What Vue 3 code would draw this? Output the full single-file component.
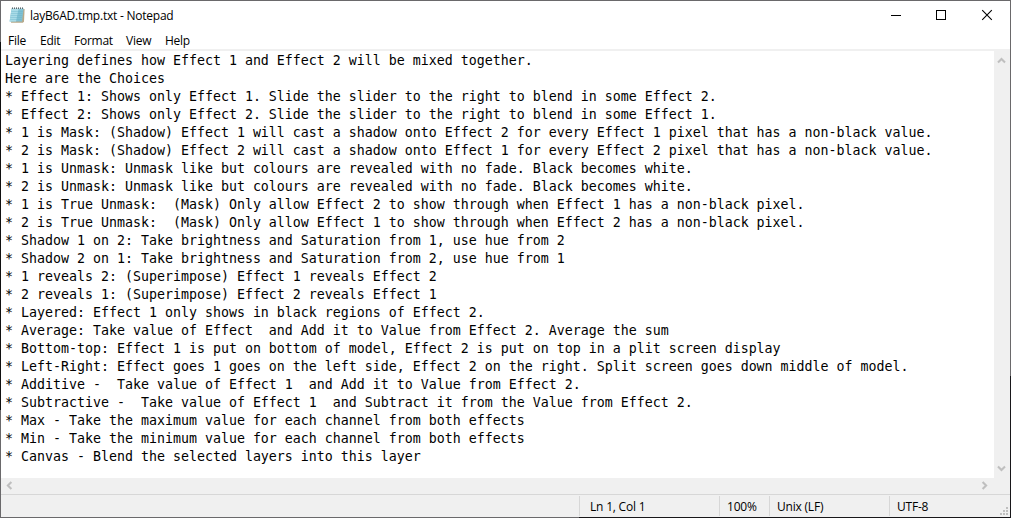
<script setup>
const menus = [
  { label: 'File', cls: 'm-file' },
  { label: 'Edit', cls: 'm-edit' },
  { label: 'Format', cls: 'm-format' },
  { label: 'View', cls: 'm-view' },
  { label: 'Help', cls: 'm-help' },
]

const lines = [
  'Layering defines how Effect 1 and Effect 2 will be mixed together.',
  'Here are the Choices',
  '* Effect 1: Shows only Effect 1. Slide the slider to the right to blend in some Effect 2.',
  '* Effect 2: Shows only Effect 2. Slide the slider to the right to blend in some Effect 1.',
  '* 1 is Mask: (Shadow) Effect 1 will cast a shadow onto Effect 2 for every Effect 1 pixel that has a non-black value.',
  '* 2 is Mask: (Shadow) Effect 2 will cast a shadow onto Effect 1 for every Effect 2 pixel that has a non-black value.',
  '* 1 is Unmask: Unmask like but colours are revealed with no fade. Black becomes white.',
  '* 2 is Unmask: Unmask like but colours are revealed with no fade. Black becomes white.',
  '* 1 is True Unmask:  (Mask) Only allow Effect 2 to show through when Effect 1 has a non-black pixel.',
  '* 2 is True Unmask:  (Mask) Only allow Effect 1 to show through when Effect 2 has a non-black pixel.',
  '* Shadow 1 on 2: Take brightness and Saturation from 1, use hue from 2',
  '* Shadow 2 on 1: Take brightness and Saturation from 2, use hue from 1',
  '* 1 reveals 2: (Superimpose) Effect 1 reveals Effect 2',
  '* 2 reveals 1: (Superimpose) Effect 2 reveals Effect 1',
  '* Layered: Effect 1 only shows in black regions of Effect 2.',
  '* Average: Take value of Effect  and Add it to Value from Effect 2. Average the sum',
  '* Bottom-top: Effect 1 is put on bottom of model, Effect 2 is put on top in a plit screen display',
  '* Left-Right: Effect goes 1 goes on the left side, Effect 2 on the right. Split screen goes down middle of model.',
  '* Additive -  Take value of Effect 1  and Add it to Value from Effect 2.',
  '* Subtractive -  Take value of Effect 1  and Subtract it from the Value from Effect 2.',
  '* Max - Take the maximum value for each channel from both effects',
  '* Min - Take the minimum value for each channel from both effects',
  '* Canvas - Blend the selected layers into this layer',
]
</script>

<template>
  <div class="window">
    <header class="titlebar">
      <svg class="app-icon" width="16" height="16" viewBox="0 0 16 16">
        <path d="M3.2 2H15.6L15 14.8l-1.2 1H2z" fill="#b7a98a" />
        <path d="M2.6 1.5h12L13 14.6H.6z" fill="#7fc0d3" />
        <path d="M2.6 1.5h7L7 14.6H.6z" fill="#a9dbe7" />
        <path d="M2.3 4.5h11.5M2 6.5h11.5M1.7 8.5h11.5M1.4 10.5h11.5M1.1 12.5h11.5" stroke="#62aec4" stroke-width=".35" />
        <path d="M2.6 1.6h12" stroke="#cfe4ea" />
        <path d="M3.5 .4v1.6M5.5 .4v1.6M7.5 .4v1.6M9.5 .4v1.6M11.5 .4v1.6M13.5 .4v1.6" stroke="#4d5b60" stroke-width=".9" />
      </svg>
      <span class="title">layB6AD.tmp.txt - Notepad</span>
      <div class="controls">
        <svg width="46" height="29" viewBox="0 0 46 29" shape-rendering="crispEdges"><path d="M18 14.5h10" stroke="#000" /></svg>
        <svg width="46" height="29" viewBox="0 0 46 29" shape-rendering="crispEdges"><path d="M17.5 9.5h9v9h-9z" fill="none" stroke="#000" /></svg>
        <svg width="45" height="29" viewBox="0 0 45 29"><path d="M17.2 9.2l9.6 9.6M26.8 9.2l-9.6 9.6" stroke="#000" stroke-width="1.1" /></svg>
      </div>
    </header>

    <nav class="menubar">
      <span v-for="m in menus" :key="m.label" class="menu" :class="m.cls">{{ m.label }}</span>
    </nav>

    <main class="editor">
      <div class="text">
        <div v-for="(line, i) in lines" :key="i" class="line">{{ line }}</div>
      </div>
      <div class="vscroll">
        <svg width="9" height="7" viewBox="0 0 9 7"><path d="M1 5.4L4.5 1.9L8 5.4" fill="none" stroke="#bfbfbf" stroke-width="2.1" /></svg>
        <svg width="9" height="7" viewBox="0 0 9 7"><path d="M1 1.6L4.5 5.1L8 1.6" fill="none" stroke="#bfbfbf" stroke-width="2.1" /></svg>
      </div>
    </main>

    <div class="hscroll">
      <svg width="7" height="9" viewBox="0 0 7 9"><path d="M5.4 1L1.9 4.5L5.4 8" fill="none" stroke="#bfbfbf" stroke-width="2.1" /></svg>
      <svg width="7" height="9" viewBox="0 0 7 9"><path d="M1.6 1L5.1 4.5L1.6 8" fill="none" stroke="#bfbfbf" stroke-width="2.1" /></svg>
    </div>

    <footer class="statusbar">
      <div class="cell blank"></div>
      <div class="cell pos"><span>Ln 1, Col 1</span></div>
      <div class="cell zoom"><span>100%</span></div>
      <div class="cell eol"><span>Unix (LF)</span></div>
      <div class="cell enc"><span>UTF-8</span></div>
      <svg class="grip" width="8" height="8" viewBox="0 0 8 8" fill="#bfbfbf" shape-rendering="crispEdges">
        <path d="M6 0h2v2H6zM3 3h2v2H3zM6 3h2v2H6zM0 6h2v2H0zM3 6h2v2H3zM6 6h2v2H6z" />
      </svg>
    </footer>
  </div>
</template>

<style scoped>
.window {
  box-sizing: border-box;
  width: 1011px;
  height: 518px;
  display: flex;
  flex-direction: column;
  padding: 1px;
  background:
    linear-gradient(#6a696b, #6a696b) 0 0 / 100% 1px no-repeat,
    linear-gradient(90deg, #6a696b 579px, #18171a 579px) 0 100% / 100% 1px no-repeat,
    linear-gradient(#6a696b 42px, #101010 42px 410px, #6a696b 410px) 0 0 / 1px 100% no-repeat,
    linear-gradient(#6a696b 376px, #18171a 376px) 100% 0 / 1px 100% no-repeat,
    #fff;
  color: #000;
  font: 12px/16px "Open Sans", "Noto Sans", sans-serif;
  overflow: hidden;
}
.titlebar {
  height: 30px;
  flex: none;
  display: flex;
  align-items: flex-start;
}
.app-icon {
  margin: 6px 0 0 8px;
}
.title {
  margin: 7px 0 0 5px;
  white-space: nowrap;
  letter-spacing: -0.23px;
}
.controls {
  display: flex;
  margin-left: auto;
}
.menubar {
  height: 18px;
  flex: none;
  display: flex;
  padding-left: 7px;
  line-height: 19px;
}
.menu {
  flex: none;
  letter-spacing: -0.25px;
}
.m-file { width: 32px; }
.m-edit { width: 34px; }
.m-format { width: 52px; }
.m-view { width: 39px; }
.editor {
  flex: none;
  height: 427px;
  display: flex;
  border-top: 2px solid #f0f0f0;
}
.text {
  flex: 1;
  padding: 1px 0 0 4px;
  font: 13.29px/18px "DejaVu Sans Mono", monospace;
  overflow: hidden;
}
.line {
  height: 18px;
  white-space: pre;
}
.vscroll {
  box-sizing: border-box;
  width: 16px;
  flex: none;
  padding: 6px 0 6px 3px;
  background: #f0f0f0;
  display: flex;
  flex-direction: column;
  justify-content: space-between;
}
.hscroll {
  box-sizing: border-box;
  height: 16px;
  flex: none;
  display: flex;
  justify-content: space-between;
  padding: 3px 22px 0 5px;
  background: #f0f0f0;
}
.statusbar {
  box-sizing: border-box;
  flex: 1;
  display: flex;
  border-top: 1px solid #d7d7d7;
  background: #f0f0f0;
  padding-top: 1px;
  position: relative;
}
.cell {
  box-sizing: border-box;
  height: 20px;
  border-right: 1px solid #d7d7d7;
  line-height: 21px;
  white-space: nowrap;
  letter-spacing: -0.2px;
}
.blank { width: 579px; }
.pos { width: 140px; padding-left: 10px; }
.zoom { width: 50px; padding-left: 7px; }
.eol { width: 120px; padding-left: 7px; }
.enc { border: 0; padding-left: 7px; }
.grip {
  position: absolute;
  right: 2px;
  bottom: 2px;
}
</style>
